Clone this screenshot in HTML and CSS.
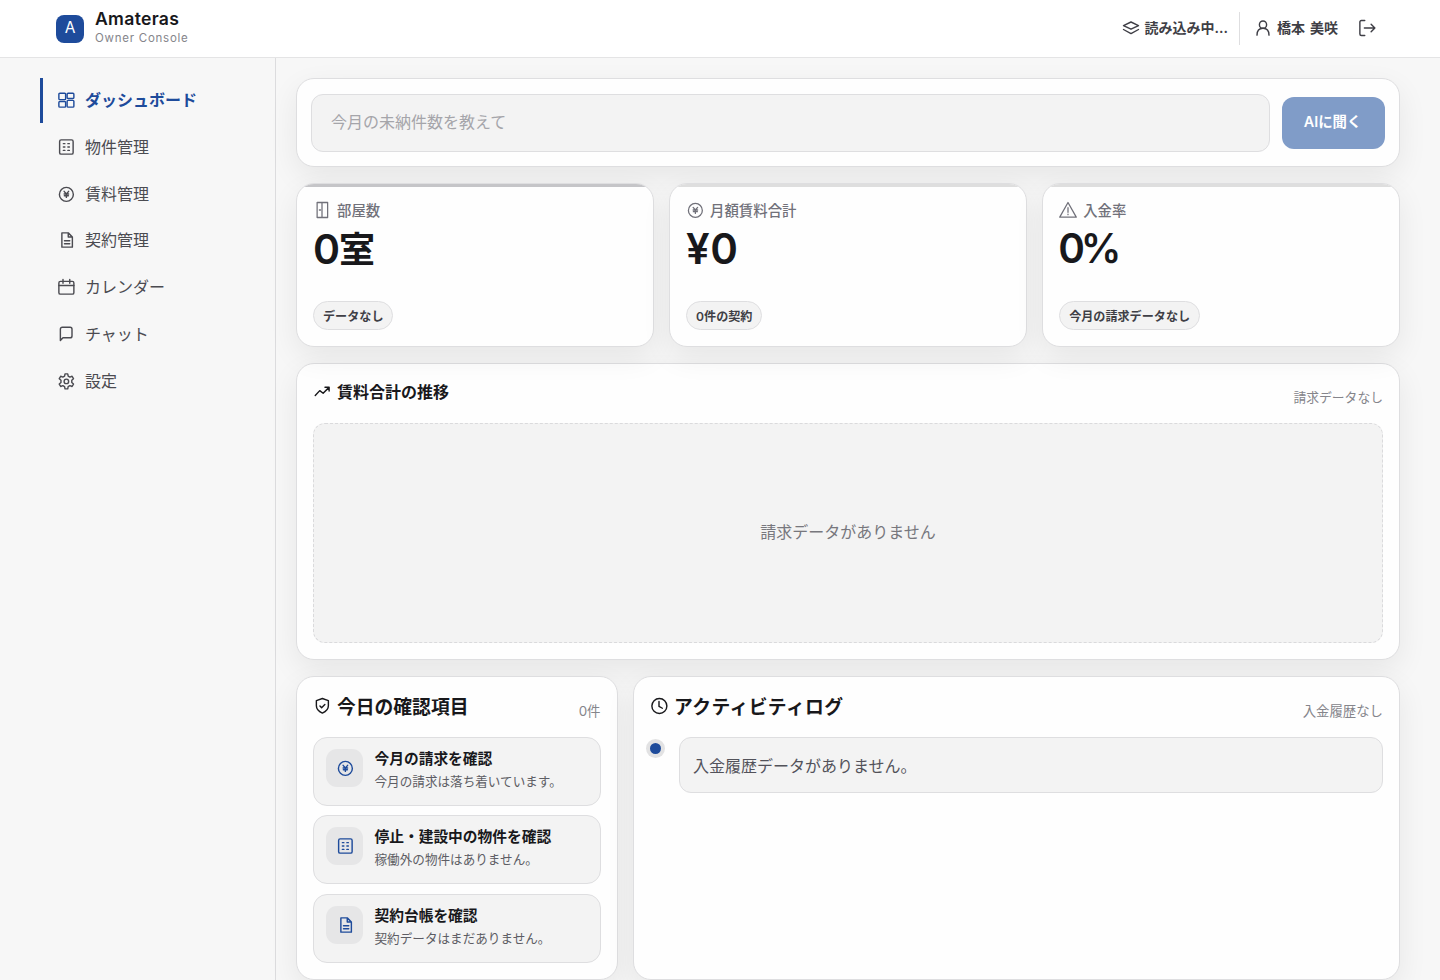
FILE: index.html
```
<!DOCTYPE html>
<html lang="ja">
<head>
  <meta charset="UTF-8">
  <title>Amateras Owner Console</title>
  <link rel="stylesheet" href="styles.css">
</head>
<body>
  <!-- icons -->
  <svg class="sprite">
    <symbol id="i-grid" viewBox="0 0 24 24"><rect x="2.500" y="3" width="9" height="8.500" rx="1.300"/><rect x="13.500" y="3" width="9" height="7" rx="1.300"/><rect x="2.500" y="14" width="9" height="7.500" rx="1.300"/><rect x="13.500" y="12.500" width="9" height="9" rx="1.300"/></symbol>
    <symbol id="i-building" viewBox="0 0 24 24"><rect x="3.500" y="2.500" width="18" height="19" rx="2"/><path d="M8.500 7.500h2M14.500 7.500h2M8.500 12h2M14.500 12h2M8.500 16.500h2M14.500 16.500h2"/></symbol>
    <symbol id="i-yen" viewBox="0 0 24 24"><circle cx="12.500" cy="12.500" r="9.300"/><path d="M9.500 8.500l3 3.500 3-3.500M12.500 12v4.500M9.500 12h6M9.800 14.300h5.400"/></symbol>
    <symbol id="i-file" viewBox="0 0 24 24"><path d="M6.500 2.500h8.500L20.500 8v13.500h-14zM15 2.500V8h5.500M10 13h7M10 17h7"/></symbol>
    <symbol id="i-calendar" viewBox="0 0 24 24"><rect x="2.500" y="4.500" width="20" height="17" rx="2"/><path d="M2.500 10h20M8 2v5M17 2v5"/></symbol>
    <symbol id="i-chat" viewBox="0 0 24 24"><path d="M4.500 20.500V5.500a2.500 2.500 0 0 1 2.500-2.500h10.500A2.500 2.500 0 0 1 20 5.500v9a2.500 2.500 0 0 1-2.500 2.500H8z"/></symbol>
    <symbol id="i-gear" viewBox="0 0 24 24"><circle cx="12.500" cy="12.500" r="3"/><path d="M10.700 2.500h3.600l.6 3 2.300 1.300 2.900-1.100 1.900 3.200-2.300 2v3.200l2.300 2-1.900 3.200-2.900-1.100-2.300 1.300-.6 3h-3.600l-.6-3-2.300-1.300-2.900 1.100L3 16.100l2.300-2v-3.200L3 8.900l1.900-3.200 2.900 1.100 2.300-1.300z"/></symbol>
    <symbol id="i-layers" viewBox="0 0 24 24"><path d="M12 4l10 4.800-10 4.800L2 8.800zM2 14l10 5.500L22 14"/></symbol>
    <symbol id="i-user" viewBox="0 0 24 24"><circle cx="12" cy="7.500" r="4.800"/><path d="M4 21.500c0-5.500 3-9.200 8-9.200s8 3.700 8 9.200"/></symbol>
    <symbol id="i-logout" viewBox="0 0 24 24"><path d="M9 22H4.500a2 2 0 0 1-2-2V4a2 2 0 0 1 2-2H9M8.500 12h14M17.500 7l5 5-5 5"/></symbol>
    <symbol id="i-door" viewBox="0 0 24 24"><path d="M5.500 2h14v20h-14zM12 2v20M8.500 12H10"/></symbol>
    <symbol id="i-alert" viewBox="0 0 24 24"><path d="M12 2L23 21.500H1zM12 9v6M12 17.500v.8"/></symbol>
    <symbol id="i-trend" viewBox="0 0 24 24"><path d="M3 18l6-6.500 4.500 3.500L21 7.500M16 7h5.500v5"/></symbol>
    <symbol id="i-shield" viewBox="0 0 24 24"><path d="M12.500 2l8 2.800v7c0 5-3.300 7.700-8 9.700-4.700-2-8-4.700-8-9.700v-7zM9.300 12l2.200 2.200 4.300-4.200"/></symbol>
    <symbol id="i-clock" viewBox="0 0 24 24"><circle cx="12.500" cy="12" r="10"/><path d="M12 6v6.500l4.500 2.500"/></symbol>
  </svg>

  <header class="topbar">
    <div class="brand">
      <span class="logo">A</span>
      <div>
        <div class="brand-name">Amateras</div>
        <div class="brand-sub">Owner Console</div>
      </div>
    </div>
    <div class="account">
      <div class="org"><svg class="icon"><use href="#i-layers"/></svg>読み込み中...</div>
      <div class="user"><svg class="icon"><use href="#i-user"/></svg>橋本 美咲</div>
      <svg class="icon logout"><use href="#i-logout"/></svg>
    </div>
  </header>

  <div class="layout">
    <nav class="sidebar">
      <a class="nav-item active"><svg class="icon"><use href="#i-grid"/></svg>ダッシュボード</a>
      <a class="nav-item"><svg class="icon"><use href="#i-building"/></svg>物件管理</a>
      <a class="nav-item"><svg class="icon"><use href="#i-yen"/></svg>賃料管理</a>
      <a class="nav-item"><svg class="icon"><use href="#i-file"/></svg>契約管理</a>
      <a class="nav-item"><svg class="icon"><use href="#i-calendar"/></svg>カレンダー</a>
      <a class="nav-item"><svg class="icon"><use href="#i-chat"/></svg>チャット</a>
      <a class="nav-item"><svg class="icon"><use href="#i-gear"/></svg>設定</a>
    </nav>

    <main class="main">
      <!-- AI search -->
      <form class="card ask">
        <input class="ask-input" type="text" placeholder="今月の未納件数を教えて">
        <button class="ask-button" type="button">AIに聞く</button>
      </form>

      <!-- KPI -->
      <section class="kpis">
        <div class="card kpi kpi-first">
          <div class="kpi-label"><svg class="icon"><use href="#i-door"/></svg>部屋数</div>
          <div class="kpi-value">0<span class="unit">室</span></div>
          <span class="pill">データなし</span>
        </div>
        <div class="card kpi">
          <div class="kpi-label"><svg class="icon"><use href="#i-yen"/></svg>月額賃料合計</div>
          <div class="kpi-value yen">¥0</div>
          <span class="pill">0件の契約</span>
        </div>
        <div class="card kpi">
          <div class="kpi-label"><svg class="icon"><use href="#i-alert"/></svg>入金率</div>
          <div class="kpi-value percent">0%</div>
          <span class="pill">今月の請求データなし</span>
        </div>
      </section>

      <section class="card chart">
        <div class="card-head">
          <h2 class="chart-title"><svg class="icon"><use href="#i-trend"/></svg>賃料合計の推移</h2>
          <span class="note">請求データなし</span>
        </div>
        <div class="chart-empty">請求データがありません</div>
      </section>

      <div class="bottom">
        <section class="card panel">
          <div class="card-head">
            <h3 class="panel-title"><svg class="icon"><use href="#i-shield"/></svg>今日の確認項目</h3>
            <span class="note">0件</span>
          </div>
          <div class="tasks">
            <div class="task">
              <span class="task-icon"><svg class="icon"><use href="#i-yen"/></svg></span>
              <div>
                <div class="task-title">今月の請求を確認</div>
                <div class="task-text">今月の請求は落ち着いています。</div>
              </div>
            </div>
            <div class="task">
              <span class="task-icon"><svg class="icon"><use href="#i-building"/></svg></span>
              <div>
                <div class="task-title">停止・建設中の物件を確認</div>
                <div class="task-text">稼働外の物件はありません。</div>
              </div>
            </div>
            <div class="task">
              <span class="task-icon"><svg class="icon"><use href="#i-file"/></svg></span>
              <div>
                <div class="task-title">契約台帳を確認</div>
                <div class="task-text">契約データはまだありません。</div>
              </div>
            </div>
          </div>
        </section>

        <section class="card panel">
          <div class="card-head">
            <h3 class="panel-title log-title"><svg class="icon"><use href="#i-clock"/></svg>アクティビティログ</h3>
            <span class="note">入金履歴なし</span>
          </div>
          <div class="log">
            <span class="log-dot"></span>
            <div class="log-item">入金履歴データがありません。</div>
          </div>
        </section>
      </div>
    </main>
  </div>
</body>
</html>
```
FILE: styles.css
```
* {
  box-sizing: border-box;
}

body {
  margin: 0;
  height: 980px;
  overflow: hidden;
  background: #f7f7f7;
  color: #18181b;
  font-family: Inter, "Noto Sans CJK JP", sans-serif;
  font-size: 16px;
}

.sprite {
  display: none;
}

.icon {
  width: 18px;
  height: 18px;
  flex: none;
  fill: none;
  stroke: currentColor;
  stroke-width: 1.9;
  stroke-linecap: round;
  stroke-linejoin: round;
}

/* header */
.topbar {
  display: flex;
  justify-content: space-between;
  height: 58px;
  padding: 0 63px 0 56px;
  background: #fff;
  border-bottom: 1px solid #e4e4e5;
}

.brand {
  display: flex;
  align-items: center;
  gap: 11px;
}

.logo {
  width: 28px;
  height: 28px;
  border-radius: 8px;
  background: #1e4b9b;
  color: #fff;
  font-size: 15.5px;
  line-height: 26px;
  text-align: center;
}

.brand-name {
  margin-top: -1px;
  font-size: 17.6px;
  font-weight: 600;
  letter-spacing: 0.3px;
  line-height: 20px;
}

.brand-sub {
  color: #85858b;
  font-size: 11.5px;
  letter-spacing: 0.75px;
  line-height: 18px;
}

.account {
  display: flex;
  align-items: center;
  color: #3f3f46;
  font-size: 14px;
  font-weight: 600;
}

.org,
.user {
  display: flex;
  align-items: center;
  gap: 5px;
  height: 33px;
  padding-bottom: 3px;
}

.org .icon,
.user .icon {
  position: relative;
  top: 1px;
}

.org {
  padding-right: 11px;
  border-right: 1px solid #dedee0;
}

.user {
  padding-left: 14px;
  word-spacing: 1.5px;
}

.logout {
  margin-left: 20px;
  margin-top: -1px;
  margin-right: 1px;
}

.layout {
  display: flex;
  height: 922px;
}

/* sidebar */
.sidebar {
  display: flex;
  flex-direction: column;
  gap: 1.9px;
  width: 236px;
  flex: none;
  margin-left: 40px;
  padding-top: 20px;
  border-right: 1px solid #dcdcde;
}

.nav-item {
  display: flex;
  align-items: center;
  gap: 10px;
  height: 44.8px;
  padding: 0 0 2px 14px;
  border-left: 3px solid transparent;
  color: #4b4b51;
}

.nav-item .icon {
  position: relative;
  top: 1px;
}

.nav-item.active {
  border-left-color: #1e4b9b;
  color: #1e4b9b;
  font-weight: 600;
}

.main {
  display: flex;
  flex-direction: column;
  gap: 16px;
  width: 1104px;
  margin-left: 20px;
  padding-top: 20px;
}

.card {
  background: #fefefe;
  border: 1px solid #dedee0;
  border-radius: 18px;
  box-shadow: 0 10px 30px rgba(0, 0, 0, 0.07);
}

.ask {
  display: flex;
  align-items: center;
  gap: 12px;
  height: 89px;
  flex: none;
  padding: 0 14px;
}

.ask-input {
  flex: 1;
  height: 58px;
  padding: 0 20px 2px 19px;
  background: #f3f3f3;
  border: 1px solid #dedee0;
  border-radius: 12px;
  font: inherit;
}

.ask-input::placeholder {
  color: #a5a5aa;
}

.ask-button {
  width: 103px;
  height: 52px;
  padding: 0 2px 4px 0;
  border: 0;
  border-radius: 12px;
  background: #809cc8;
  color: #fff;
  font: inherit;
  font-size: 14.4px;
  font-weight: 600;
}

/* kpi cards */
.kpis {
  display: grid;
  grid-template-columns: repeat(3, 1fr);
  gap: 15.2px;
}

.kpi {
  display: flex;
  flex-direction: column;
  align-items: flex-start;
  position: relative;
  height: 164px;
  padding: 16px;
  overflow: hidden;
}

.kpi::before {
  content: "";
  position: absolute;
  top: 0;
  left: 0;
  right: 0;
  height: 3px;
  background: #dedede;
}

.kpi-first::before {
  background: #c5c5c8;
}

.kpi-label {
  display: flex;
  align-items: center;
  gap: 6px;
  height: 22px;
  margin-top: -2px;
  color: #71717a;
  font-size: 14.4px;
  font-weight: 500;
}

.kpi-label .icon {
  position: relative;
  top: 1px;
  stroke-width: 1.7;
}

.kpi-value {
  margin-top: 8px;
  font-size: 41px;
  font-weight: 600;
  letter-spacing: -1px;
  line-height: 42px;
  white-space: nowrap;
}

.yen {
  font-size: 42px;
  letter-spacing: 0.5px;
}

.percent {
  margin-left: -1px;
  font-size: 40.500px;
  letter-spacing: -4px;
}

.unit {
  position: relative;
  top: -1px;
  font-size: 36px;
  font-weight: 700;
  line-height: 1;
}

.pill {
  margin-top: auto;
  height: 29px;
  padding: 0 9px;
  border: 1px solid #dedee0;
  border-radius: 15px;
  background: #f3f3f3;
  color: #3f3f46;
  font-size: 12.1px;
  font-weight: 600;
  line-height: 29px;
}

/* chart */
.chart {
  height: 297px;
  flex: none;
  padding: 16px;
}

.card-head {
  display: flex;
  justify-content: space-between;
  height: 43px;
}

.chart-title,
.panel-title {
  display: flex;
  align-items: center;
  gap: 6px;
  height: 24px;
  margin: -1px 0 0;
  font-size: 16px;
  font-weight: 600;
}

.note {
  color: #85858b;
  font-size: 12.8px;
  line-height: 35px;
}

.chart-empty {
  display: flex;
  align-items: center;
  justify-content: center;
  height: 220px;
  padding-bottom: 4px;
  border: 1px dashed #dadadc;
  border-radius: 12px;
  background: #f3f3f3;
  color: #77777d;
}

/* bottom row */
.bottom {
  display: grid;
  grid-template-columns: 321.500px 1fr;
  gap: 15.500px;
}

.panel {
  height: 304px;
  padding: 16px;
}

.panel-title {
  height: 28px;
  margin-top: -2px;
  font-size: 18.8px;
}

.panel-title .icon {
  position: relative;
  top: 1px;
}

.log-title {
  letter-spacing: 0.4px;
}

.panel .card-head {
  height: 44px;
}

.panel .note {
  font-size: 13.4px;
  line-height: 36px;
}

.tasks {
  display: flex;
  flex-direction: column;
  gap: 9.400px;
}

.task {
  display: flex;
  gap: 11.500px;
  height: 69px;
  padding: 11px 12px;
  border: 1px solid #dedee0;
  border-radius: 14px;
  background: #f3f3f3;
}

.task-icon {
  display: flex;
  align-items: center;
  justify-content: center;
  width: 37px;
  height: 38px;
  border-radius: 11px;
  background: #e6e6e7;
  color: #1e4b9b;
}

.task-title {
  margin-top: -1px;
  font-size: 14.72px;
  font-weight: 600;
  line-height: 22px;
}

.task-text {
  color: #5d5d64;
  font-size: 12.6px;
  line-height: 23px;
}

.log {
  display: flex;
}

.log-dot {
  width: 11px;
  height: 11px;
  margin: 6px 18px 0 0;
  border-radius: 50%;
  background: #1e4b9b;
  box-shadow: 0 0 0 4px #e2e2e3;
}

.log-item {
  flex: 1;
  height: 56px;
  padding-left: 13px;
  border: 1px solid #dedee0;
  border-radius: 12px;
  background: #f3f3f3;
  color: #52525a;
  line-height: 57px;
}
```
